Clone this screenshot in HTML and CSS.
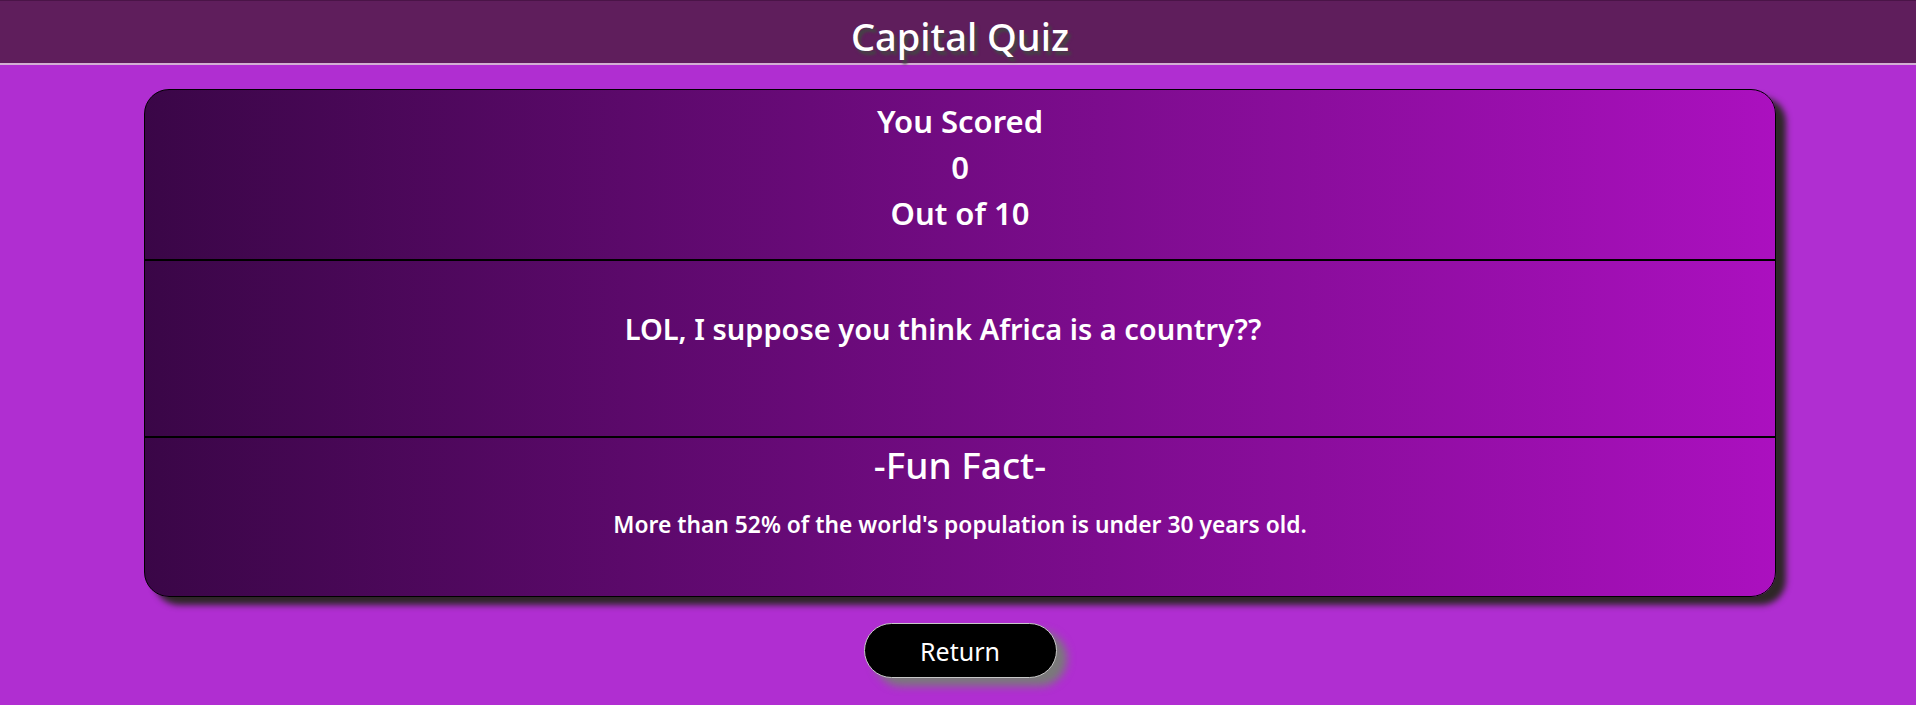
FILE: index.html
```html
<!DOCTYPE html>
<html>
<head>
<meta charset="utf-8">
<title>Capital Quiz</title>
<link rel="stylesheet" href="styles.css">
</head>
<body>
<header class="topbar">
  <h1 class="title">Capital Quiz</h1>
</header>
<main class="page">
  <section class="card">
    <div class="panel score">
      <div class="line">You Scored</div>
      <div class="line">0</div>
      <div class="line">Out of 10</div>
    </div>
    <div class="panel verdict">
      <div class="line verdict-text">LOL, I suppose you think Africa is a country??</div>
    </div>
    <div class="panel fact">
      <div class="fact-title">-Fun Fact-</div>
      <p class="fact-text">More than 52% of the world's population is under 30 years old.</p>
    </div>
  </section>
  <div class="actions">
    <button class="return">Return</button>
  </div>
</main>
</body>
</html>
```

FILE: styles.css
```css
* { box-sizing: border-box; }
html, body {
  margin: 0;
  padding: 0;
}
body {
  background: #b02ed1;
  font-family: "Noto Sans", "Lato", sans-serif;
  color: #fff;
  height: 705px;
  overflow: hidden;
}
.topbar {
  height: 65px;
  background: #5f1e5c;
  border-top: 1px solid #4a1447;
  border-bottom: 2px solid #d2b0d2;
  display: flex;
  justify-content: center;
  align-items: center;
}
.title {
  margin: 0;
  font-size: 38px;
  font-weight: 500;
  line-height: 1;
  color: #fff;
  text-shadow: 3px 4px 3px #444;
  padding-top: 8px;
  padding-left: 4px;
}
.page {
  padding-top: 24px;
  padding-left: 4px;
}
.card {
  width: 1632px;
  margin: 0 auto;
  border: 1px solid #000;
  border-radius: 25px;
  overflow: hidden;
  background: linear-gradient(to right, #3a0647, #ab10bf);
  box-shadow: 10px 8px 6px #2e2727;
}
.panel {
  text-align: center;
  font-weight: 600;
}
.line {
  font-size: 31px;
  line-height: 46px;
}
.verdict-text {
  font-size: 29px;
  padding-right: 34px;
}
.score {
  height: 171px;
  padding-top: 8px;
  border-bottom: 2px solid #000;
}
.verdict {
  height: 177px;
  padding-top: 45px;
  border-bottom: 2px solid #000;
}
.fact {
  height: 158px;
  padding-top: 4px;
}
.fact-title {
  font-size: 37px;
  font-weight: 500;
  line-height: 46px;
}
.fact-text {
  margin: 22px 0 0;
  font-size: 22.8px;
  font-weight: 600;
  line-height: 30px;
}
.actions {
  display: flex;
  justify-content: center;
  padding-top: 26px;
}
.return {
  width: 193px;
  height: 55px;
  border-radius: 28px;
  background: #000;
  color: #fff;
  border: 1px solid #c8c8c8;
  font-family: "Noto Sans", "Lato", sans-serif;
  font-size: 25px;
  box-shadow: 10px 8px 8px #7a7a7a;
}
```
